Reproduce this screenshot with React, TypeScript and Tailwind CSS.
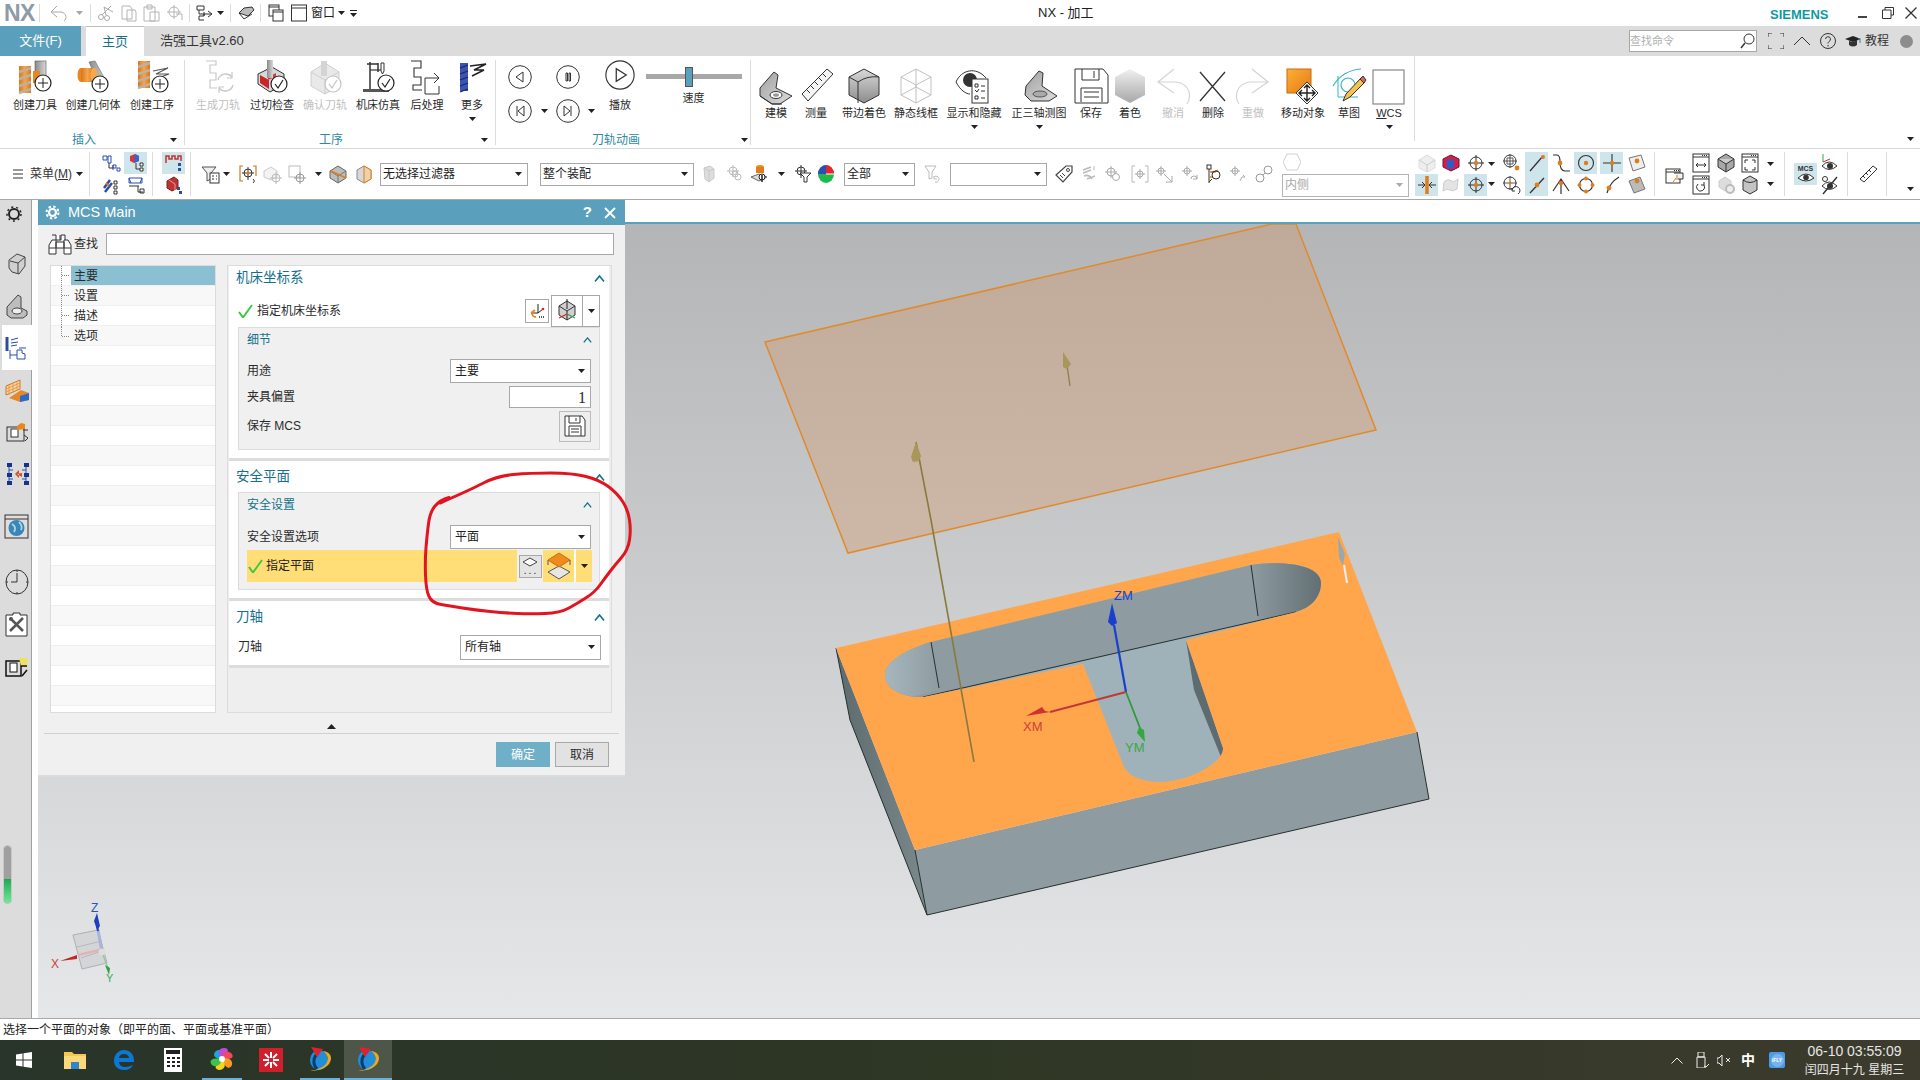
import React from "react";

type N = React.ReactNode;
const Sv = ({ s = 20, vb, c, children }: { s?: number; vb?: string; c?: string; children?: N }) => (
  <svg width={s} height={s} viewBox={vb || `0 0 ${s} ${s}`} className={"block shrink-0 overflow-visible " + (c || "")}>
    {children}
  </svg>
);
const Tri = ({ c = "" }: { c?: string }) => (
  <svg width="7" height="4" viewBox="0 0 7 4" className={"block shrink-0 " + c}>
    <polygon points="0,0 7,0 3.5,4" fill="#222" />
  </svg>
);
const Plus = ({ x = 26, y = 23 }: { x?: number; y?: number }) => (
  <g>
    <circle cx={x} cy={y} r="8" fill="#fff" stroke="#222" strokeWidth="1.2" />
    <path d={`M${x - 5} ${y}H${x + 5}M${x} ${y - 5}V${y + 5}`} stroke="#222" strokeWidth="1" />
  </g>
);
const Chk = ({ x = 26, y = 23, m = false }: { x?: number; y?: number; m?: boolean }) => (
  <g>
    <circle cx={x} cy={y} r="8" fill="#fff" stroke={m ? "#c4c4c4" : "#222"} strokeWidth="1.2" />
    <path d={`M${x - 4} ${y}l3 4l5 -8`} fill="none" stroke={m ? "#c4c4c4" : "#222"} strokeWidth="1.2" />
  </g>
);
const Mill = ({ x = 2, y = 6 }: { x?: number; y?: number }) => (
  <g>
    <rect x={x} y={y} width="12" height="27" fill="url(#gOr)" />
    <path d={`M${x} ${y + 6}l12 -4M${x} ${y + 13}l12 -4M${x} ${y + 20}l12 -4M${x} ${y + 27}l12 -4`} stroke="#b9b1a8" strokeWidth="2.4" />
  </g>
);

/* Ribbon icons */
const R: Record<string, N> = {
  mill: (
    <Sv s={36}>
      <Mill />
      <rect x="18" y="1" width="11" height="19" fill="url(#gGr)" stroke="#555" strokeWidth=".6" />
      <path d="M16 11h7v12h-7z" fill="#e8861f" />
      <Plus />
    </Sv>
  ),
  geom: (
    <Sv s={36}>
      <path d="M14 2l6 -1l12 22l-5 9z" fill="url(#gGr)" stroke="#666" strokeWidth=".6" />
      <ellipse cx="6" cy="15" rx="3.5" ry="7" fill="#e8861f" />
      <rect x="6" y="8" width="13" height="14" fill="url(#gOr)" />
      <ellipse cx="19" cy="15" rx="3.5" ry="7" fill="#f3a94f" />
      <Plus x={25} y={24} />
    </Sv>
  ),
  oper: (
    <Sv s={36}>
      <Mill x={4} y={1} />
      <path d="M19 11l15 -3l-12 6h13l-14 5" fill="none" stroke="#555" strokeWidth="1.1" />
      <Plus x={26} y={24} />
    </Sv>
  ),
  gen: (
    <Sv s={36}>
      <path d="M6 1h10v4h-6v8h6v7h-6v8h7" fill="none" stroke="#c8c8c8" strokeWidth="1.2" />
      <path d="M18 20a8 8 0 0 1 14 -3M33 25a8 8 0 0 1 -14 3" fill="none" stroke="#c8c8c8" strokeWidth="1.4" />
      <path d="M32 12v6h-5M19 33v-6h5" fill="none" stroke="#c8c8c8" strokeWidth="1.2" />
    </Sv>
  ),
  check: (
    <Sv s={36}>
      <path d="M4 14l14 -7l12 7v10l-14 8l-12 -8z" fill="#d8d8d8" stroke="#333" />
      <path d="M6 15l9 5v9l-9 -6z" fill="#c9262c" />
      <path d="M14 20l8 -3v-4l-8 4z" fill="#d93b36" />
      <rect x="13" y="0" width="6" height="18" fill="url(#gGr)" />
      <Chk x={25} y={24} />
    </Sv>
  ),
  confirm: (
    <Sv s={36}>
      <path d="M4 12l14 -9l14 9v14l-14 8l-14 -8z" fill="#e9e9e9" stroke="#cfcfcf" />
      <path d="M4 12l14 8v14M18 20l14 -8" fill="none" stroke="#cfcfcf" />
      <rect x="14" y="1" width="6" height="15" fill="#d4d4d4" />
      <Chk x={26} y={24} m />
    </Sv>
  ),
  sim: (
    <Sv s={36}>
      <path d="M7 4H18M10 2V31M18 3V12M4 31H28" stroke="#333" strokeWidth="1.5" fill="none" />
      <rect x="3" y="29" width="26" height="3" fill="#555" />
      <path d="M10 10H21" stroke="#333" strokeWidth="1.2" />
      <path d="M21 3h3v8l-1.5 3l-1.5 -3z" fill="#fff" stroke="#333" />
      <Chk x={26} y={23} />
    </Sv>
  ),
  post: (
    <Sv s={36}>
      <path d="M2 1h10v7h-7v9h7v8h-8v5h9" fill="none" stroke="#333" strokeWidth="1.1" />
      <path d="M16 18h14l-5 -5M30 18l-5 5M16 18v16h14v-8" fill="none" stroke="#333" strokeWidth="1" />
    </Sv>
  ),
  more: (
    <Sv s={36}>
      <rect x="6" y="3" width="8" height="28" fill="#3a54b4" />
      <path d="M6 8l8 -3M6 14l8 -3M6 20l8 -3M6 26l8 -3M6 32l8 -3" stroke="#16285e" strokeWidth="1.2" />
      <path d="M16 6l16 -2l-12 6h10l-12 6" fill="none" stroke="#222" strokeWidth="1.4" />
    </Sv>
  ),
  bracket: (
    <Sv s={36}>
      <path d="M2 20l14 -16l4 3l-2 13l16 8l-12 8h-8l-12 -8z" fill="url(#gGr2)" stroke="#333" />
      <ellipse cx="18" cy="27" rx="6" ry="3.5" fill="#fff" stroke="#333" />
      <ellipse cx="18" cy="27" rx="3" ry="1.8" fill="#999" />
      <path d="M2 28l12 8h10" fill="none" stroke="#333" />
    </Sv>
  ),
  ruler: (
    <Sv s={36}>
      <path d="M4 26l25 -25l6 5l-25 27z" fill="#f4f4f4" stroke="#333" />
      <path d="M9 22l3 3M13 18l3 3M17 14l3 3M21 10l3 3M25 6l3 3" stroke="#333" />
    </Sv>
  ),
  edge: (
    <Sv s={36}>
      <path d="M3 9l15 -8l15 8v18l-15 8l-15 -8z" fill="url(#gGr3)" stroke="#333" />
      <path d="M3 9l9 5a30 30 0 0 1 21 -5M12 14v21" fill="none" stroke="#333" />
    </Sv>
  ),
  wire: (
    <Sv s={36}>
      <path d="M3 9l15 -8l15 8v18l-15 8l-15 -8zM3 9l15 8l15 -8M18 17v18M3 27l15 -8l15 8M18 1v18" fill="none" stroke="#c0c0c0" />
    </Sv>
  ),
  eye: (
    <Sv s={36}>
      <path d="M0 14C5 2 20 -2 30 10" fill="none" stroke="#333" strokeWidth="1" />
      <path d="M0 14c4 8 10 12 14 12" fill="none" stroke="#333" strokeWidth="1" />
      <circle cx="14" cy="12" r="7" fill="#333" />
      <rect x="16" y="11" width="16" height="24" fill="#fff" stroke="#333" />
      <path d="M19 16h3v3h-3zM25 18h4M19 22l2 2l2 -3M25 23h4M19 28h3v3h-3zM25 30h4" fill="none" stroke="#333" />
    </Sv>
  ),
  flat: (
    <Sv s={36}>
      <path d="M5 18l13 -15l4 2l-1 13l15 10l-8 5h-18l-6 -6z" fill="url(#gGr2)" stroke="#333" />
      <ellipse cx="19" cy="26" rx="7" ry="3" fill="#aaa" stroke="#555" />
    </Sv>
  ),
  save: (
    <Sv s={36}>
      <path d="M2 1h28l5 6v28h-33z" fill="#fff" stroke="#333" />
      <path d="M9 1v11h17v-11M21 3v7M8 34v-14h21v14M11 24h15M11 29h15" fill="none" stroke="#333" />
    </Sv>
  ),
  shade: (
    <Sv s={36}>
      <path d="M3 9l15 -8l15 8v18l-15 8l-15 -8z" fill="url(#gGr4)" />
    </Sv>
  ),
  undo: (
    <Sv s={36}>
      <path d="M19 1L3 14l16 11M3 14h18c14 2 16 14 11 22" fill="none" stroke="#d4d4d4" strokeWidth="1.2" />
    </Sv>
  ),
  del: (
    <Sv s={36}>
      <path d="M5 4l25 29M30 4l-25 29" stroke="#333" strokeWidth="1.3" />
    </Sv>
  ),
  redo: (
    <Sv s={36}>
      <path d="M17 1l16 13l-16 11M33 14h-18c-14 2 -16 14 -11 22" fill="none" stroke="#d4d4d4" strokeWidth="1.2" />
    </Sv>
  ),
  move: (
    <Sv s={36}>
      <rect x="2" y="1" width="24" height="24" fill="url(#gOr2)" stroke="#c76a10" />
      <path d="M22 14l11 11l-11 11l-11 -11z" fill="#fff" stroke="#333" />
      <path d="M22 17v16M14 25h16M19 20l3 -3l3 3M19 30l3 3l3 -3M17 22l-3 3l3 3M27 22l3 3l-3 3" fill="none" stroke="#222" strokeWidth="1.4" />
    </Sv>
  ),
  sketch: (
    <Sv s={36}>
      <path d="M2 18C8 8 18 2 30 1" fill="none" stroke="#32b4c4" strokeWidth="1.2" />
      <path d="M7 8v21h20" fill="none" stroke="#32b4c4" />
      <circle cx="17" cy="17" r="7" fill="none" stroke="#32b4c4" strokeWidth="1.2" />
      <path d="M12 33l3 -7l14 -15l4 4l-14 14z" fill="#f6c34a" stroke="#333" />
      <path d="M29 11l4 4l2 -3l-3 -4z" fill="#e0635a" stroke="#333" />
    </Sv>
  ),
  wcs: (
    <Sv s={36}>
      <rect x="2" y="2" width="31" height="34" fill="#fff" stroke="#888" strokeWidth="1.2" />
    </Sv>
  ),
};

const Target = () => (
  <g>
    <circle cx="10" cy="10" r="6" fill="none" stroke="#333" />
    <path d="M10 2v16M2 10h16" stroke="#333" />
    <circle cx="10" cy="10" r="2.2" fill="#e07c1a" />
  </g>
);
/* Small toolbar icons */
const S: Record<string, N> = {
  t1: <><path d="M2 3h4v4h-4zM7 3h3v7h-3zM12 12h3v3h-3zM16 15h3v3h-3zM12 17v-5" fill="#fff" stroke="#2a4ea8" /><path d="M8 10v5h4" fill="none" stroke="#333" /></>,
  t2: <><path d="M4 3l5 -2l4 2v5l-5 2l-4 -2z" fill="#d23a3a" /><path d="M9 1l4 2v5l-5 2z" fill="#3a62d2" /><path d="M14 10h3v3h-3zM14 15h3v3h-3z" fill="#fff" stroke="#333" /><path d="M10 10v6h4" fill="none" stroke="#333" /></>,
  t3: <><path d="M3 13l6 -8M4 17l7 -9" stroke="#2a4ea8" strokeWidth="2.5" /><path d="M5 8l3 3" stroke="#e07c1a" strokeWidth="2" /><path d="M13 6h3v3h-3zM13 11h3v3h-3zM13 16h3v3h-3z" fill="#fff" stroke="#333" /></>,
  t4: <><path d="M3 3h13v5h-13zM3 3l2 5M16 3l-2 5" fill="none" stroke="#2a4ea8" /><path d="M3 11h10M12 11v6h5M14 14h4v4h-4z" fill="none" stroke="#333" /></>,
  t5: <><path d="M2 10V3h3v3h3V3h3v3h3V3h3v5" fill="none" stroke="#c43030" strokeWidth="1.5" /><path d="M14 10h3v3h-3zM14 15h3v3h-3z" fill="#2a4ea8" /></>,
  t6: <><path d="M3 6l7 -4l4 3v8l-6 3l-5 -3z" fill="#b33" stroke="#722" /><path d="M5 5l6 4v6" fill="none" stroke="#e99" /><path d="M13 12h3v3h-3zM15 16h3v3h-3z" fill="#2a4ea8" /></>,
  filter: <><path d="M1 3h14l-5 6v6l-4 2v-8z" fill="#eee" stroke="#555" /><rect x="9" y="9" width="9" height="10" fill="#fff" stroke="#333" /><path d="M11 12h2M15 12h1M11 15h2M15 15h1" stroke="#333" /></>,
  brk: <><path d="M5 2h-3v15h3M15 2h3v10" fill="none" stroke="#c87a20" strokeWidth="1.2" /><circle cx="10" cy="9" r="4" fill="none" stroke="#333" /><path d="M10 3v13M4 9h12" stroke="#333" /><circle cx="10" cy="9" r="1.5" fill="#e07c1a" /><path d="M15 15q3 2 0 4" fill="none" stroke="#333" /></>,
  mc: <><path d="M2 7l7 -4l6 4v6l-6 3l-7 -3z" fill="#f3f3f3" stroke="#cbcbcb" /><circle cx="14" cy="14" r="4" fill="none" stroke="#bbb" /><path d="M14 8v12M8 14h12" stroke="#bbb" /></>,
  ms: <><rect x="2" y="2" width="11" height="11" fill="#fff" stroke="#bbb" /><circle cx="13" cy="14" r="4" fill="none" stroke="#999" /><path d="M13 8v12M7 14h12" stroke="#999" /></>,
  c1: <><path d="M2 7l8 -5l8 5v7l-8 5l-8 -5z" fill="#bdbdbd" stroke="#666" /><path d="M2 7l8 5l8 -5M10 12v7" fill="none" stroke="#777" /><path d="M3 7l15 7" stroke="#e07c1a" strokeWidth="1.5" /></>,
  c2: <><path d="M3 6l7 -4l7 4v9l-7 4l-7 -4z" fill="#d8d8d8" stroke="#888" /><path d="M10 2l7 4v9l-7 4z" fill="#f0d0a8" stroke="#e07c1a" /></>,
  m1: <><path d="M5 4l6 -2l4 3v9l-5 4l-4 -3z" fill="#ddd" stroke="#c8c8c8" /><path d="M5 4l5 3v11M10 7l5 -2" fill="none" stroke="#c8c8c8" /></>,
  m2: <><circle cx="8" cy="7" r="4" fill="none" stroke="#bbb" /><path d="M8 1v12M2 7h12" stroke="#bbb" /><circle cx="13" cy="13" r="3" fill="none" stroke="#bbb" /><circle cx="10" cy="10" r="3" fill="none" stroke="#bbb" /></>,
  ord: <><ellipse cx="10" cy="3" rx="4" ry="2" fill="#f08a1a" /><rect x="6" y="3" width="8" height="6" fill="#e07c1a" /><path d="M1 13l8 -3l8 3l-8 4z" fill="#ddd" stroke="#666" /><circle cx="12" cy="13" r="3" fill="#fff" stroke="#222" /><path d="M12 11v7" stroke="#222" strokeWidth="1.5" /></>,
  tfil: <><circle cx="8" cy="7" r="4" fill="none" stroke="#333" /><path d="M8 1v13M2 7h12" stroke="#333" /><path d="M7 9h11l-4 4v5h-3v-5z" fill="#fff" stroke="#333" /></>,
  pie: <><ellipse cx="10" cy="10" rx="8" ry="9" fill="#1fb84b" /><path d="M10 10V1a8 9 0 0 1 8 9z" fill="#e8222e" /><path d="M10 1a8 9 0 0 0 -8 9h8z" fill="#2b4fb8" /><path d="M10 10h8" stroke="#fff" /></>,
  fback: <><path d="M3 2h11l-4 6v6l-3 1v-7z" fill="#fff" stroke="#bbb" /><path d="M12 13a3 3 0 1 1 1 5M12 12v3h3" fill="none" stroke="#bbb" /></>,
  tag: <><path d="M2 11l10 -9h6v6l-9 10z" fill="#fff" stroke="#444" strokeWidth="1.2" /><circle cx="14" cy="6" r="1.5" fill="none" stroke="#444" /><path d="M6 11l3 3M8 9l3 3" stroke="#444" /></>,
  g1: <><path d="M4 6l8 -3M4 9l8 -3M8 15l8 -3M5 12q5 -2 8 3" fill="none" stroke="#bbb" strokeWidth="1.6" /><path d="M15 2v4" stroke="#bbb" /></>,
  g2: <><circle cx="8" cy="8" r="4" fill="none" stroke="#aaa" /><path d="M8 2v12M2 8h12" stroke="#aaa" /><circle cx="13" cy="13" r="3.5" fill="#fff" stroke="#aaa" /></>,
  g3: <><path d="M5 2h-3v16h3M15 2h3v16h-3" fill="none" stroke="#bbb" /><circle cx="10" cy="10" r="3" fill="none" stroke="#aaa" /><path d="M10 5v10M5 10h10" stroke="#aaa" /></>,
  g4: <><circle cx="7" cy="7" r="3" fill="none" stroke="#aaa" /><path d="M7 2v10M2 7h10" stroke="#aaa" /><path d="M10 10l8 8M18 12v6h-6" fill="none" stroke="#aaa" /></>,
  g5: <><circle cx="7" cy="7" r="3" fill="none" stroke="#aaa" /><path d="M7 2v10M2 7h10" stroke="#aaa" /><path d="M11 15a3 3 0 0 1 6 0M17 11v4h-4" fill="none" stroke="#aaa" /></>,
  spec: <><rect x="4" y="1" width="4" height="4" fill="#fff" stroke="#333" /><path d="M6 5v14" stroke="#333" /><path d="M7 8h5l3 -2M7 13h3" stroke="#e07c1a" strokeWidth="1.4" /><circle cx="13" cy="11" r="4" fill="none" stroke="#333" /><path d="M6 18l3 -3" stroke="#333" /></>,
  g6: <><circle cx="7" cy="7" r="3" fill="none" stroke="#aaa" /><path d="M7 2v10M2 7h10" stroke="#aaa" /><path d="M12 17l2 -4h3M15 11l2 2" fill="none" stroke="#aaa" /></>,
  chain: <><circle cx="6" cy="14" r="4" fill="none" stroke="#999" /><circle cx="14" cy="6" r="4" fill="none" stroke="#999" /><path d="M9 11l2 -2" stroke="#999" /></>,
  cubeM: <><path d="M2 7l8 -5l8 5v8l-8 4l-8 -4z" fill="#eee" stroke="#ddd" /><path d="M2 7l8 5l8 -5M10 12v7" fill="none" stroke="#ccc" /></>,
  cubeR: <><path d="M2 6l8 -4l8 4v8l-8 4l-8 -4z" fill="#cc2148" stroke="#7a1030" /><path d="M6 7l7 -1v9l-7 1z" fill="#3558c8" /></>,
  tgt: <Target />,
  tgtD: <><circle cx="9" cy="8" r="6" fill="none" stroke="#333" /><path d="M9 1v14M2 8h14M6 5h6M6 11h6M6 5v6M12 5v6" stroke="#333" strokeWidth=".8" /><circle cx="16" cy="15" r="2.4" fill="#e07c1a" /></>,
  tgtB: <><circle cx="9" cy="8" r="6" fill="none" stroke="#333" /><path d="M9 1v14M2 8h14" stroke="#333" strokeWidth=".8" /><circle cx="9" cy="8" r="1.5" fill="#e07c1a" /><path d="M11 15a4 4 0 1 1 6 4M11 13v3h3" fill="none" stroke="#333" /></>,
  line: <><path d="M3 18L16 3" stroke="#333" strokeWidth="1.3" /><circle cx="16" cy="4" r="2" fill="#e07c1a" /></>,
  line2: <><path d="M3 18L17 3" stroke="#333" strokeWidth="1.3" /><circle cx="10" cy="10" r="2.4" fill="#e07c1a" /></>,
  tan: <><path d="M2 2h4c3 0 3 4 3 7s0 9 5 9h5" fill="none" stroke="#333" strokeWidth="1.2" /><circle cx="9" cy="10" r="2.4" fill="#e07c1a" /></>,
  tan2: <><path d="M2 16q6 -9 8 -12q2 3 8 12M10 4v15" fill="none" stroke="#333" strokeWidth="1.2" /><circle cx="10" cy="8" r="2.2" fill="#e07c1a" /></>,
  circ: <><circle cx="10" cy="10" r="7.5" fill="none" stroke="#333" strokeWidth="1.1" /><circle cx="10" cy="10" r="2.2" fill="#e07c1a" /></>,
  circ4: <><circle cx="10" cy="10" r="6.5" fill="none" stroke="#333" strokeWidth="1.1" /><circle cx="10" cy="3.5" r="2" fill="#e07c1a" /><circle cx="10" cy="16.5" r="2" fill="#e07c1a" /><circle cx="3.5" cy="10" r="2" fill="#e07c1a" /><circle cx="16.5" cy="10" r="2" fill="#e07c1a" /></>,
  cross: <><path d="M10 1v18M1 10h18" stroke="#333" strokeWidth="1.1" /><circle cx="10" cy="10" r="2.2" fill="#e07c1a" /></>,
  arc: <><path d="M5 18C7 10 12 5 17 2" fill="none" stroke="#333" strokeWidth="1.2" /><circle cx="7" cy="13" r="2.4" fill="#e07c1a" /></>,
  srf: <><path d="M2 5l12 -3l4 12l-12 4z" fill="#eee" stroke="#777" /><circle cx="10" cy="8" r="2.4" fill="#e07c1a" /></>,
  srf2: <><path d="M2 6l11 -4l5 12l-11 4z" fill="#bbb" stroke="#777" /><circle cx="10" cy="6" r="2.4" fill="#e07c1a" /></>,
  midb: <><path d="M10 1v18" stroke="#e07c1a" strokeWidth="3.5" /><path d="M1 10h6M19 10h-6M5 7l3 3l-3 3M15 7l-3 3l3 3" fill="none" stroke="#333" /></>,
  srfM: <><path d="M3 7q4 -4 7 -1q3 2 7 -2l-1 10q-4 3 -7 1q-3 -2 -7 1z" fill="#e4e4e4" stroke="#ccc" /></>,
  win1: <><rect x="1" y="5" width="14" height="14" fill="#fff" stroke="#333" /><path d="M1 8h14M9 6.500h1M11 6.500h1M13 6.500h1" stroke="#333" /><path d="M9 9h9v6h-5" fill="#f3f3f3" stroke="#333" /><path d="M8 18l3 -4M12 11v5" stroke="#e07c1a" /></>,
  fit: <><rect x="2" y="1" width="16" height="18" fill="#fff" stroke="#333" /><path d="M2 4h16M11 2.500h1M13 2.500h1M15 2.500h1M5 12h10M5 12l2 -2M5 12l2 2M15 12l-2 -2M15 12l-2 2" fill="none" stroke="#333" /></>,
  reg: <><rect x="2" y="1" width="16" height="18" fill="#fff" stroke="#333" /><path d="M2 4h16M11 2.500h1M13 2.500h1M15 2.500h1" stroke="#333" /><path d="M7 9a4 4 0 1 0 6 1M13 7v3h-3" fill="none" stroke="#333" /></>,
  zoom: <><rect x="2" y="1" width="16" height="18" fill="#fff" stroke="#333" /><path d="M2 4h16M11 2.500h1M13 2.500h1M15 2.500h1M5 7h3M5 7v3M15 7h-3M15 7v3M5 17h3M5 17v-3M15 17h-3M15 17v-3" fill="none" stroke="#333" /></>,
  box3: <><path d="M2 6l8 -5l8 5v8l-8 5l-8 -5z" fill="#a8a8a8" stroke="#333" /><path d="M2 6l8 5l8 -5" fill="#ccc" stroke="#333" /><path d="M10 11v8" stroke="#333" /></>,
  gearM: <><path d="M3 6l6 -4l6 4v6l-6 4l-6 -4z" fill="#ddd" stroke="#ccc" /><circle cx="14" cy="14" r="4" fill="#eee" stroke="#bbb" strokeWidth="2" /></>,
  hex3: <><path d="M3 5l7 -4l7 4v10l-7 4l-7 -4z" fill="#c4c4c4" stroke="#333" /><path d="M3 5q7 5 14 0" fill="none" stroke="#333" /></>,
  eyeA: <><path d="M2 13q7 -8 15 0q-8 7 -15 0z" fill="#fff" stroke="#333" /><circle cx="10" cy="13" r="3" fill="#333" /><path d="M3 1v8" stroke="#2fa84f" /><path d="M3 9l7 -3" stroke="#c43030" /></>,
  eyeS: <><path d="M2 11q7 -8 15 0q-8 7 -15 0z" fill="#fff" stroke="#333" /><circle cx="10" cy="11" r="3" fill="#333" /><path d="M3 19L17 2" stroke="#333" strokeWidth="1.4" /><circle cx="5" cy="4" r="2.500" fill="none" stroke="#333" /></>,
  rul: <><path d="M2 15L15 2l4 3L6 18z" fill="#fff" stroke="#333" /><path d="M5 12l2 2M8 9l2 2M11 6l2 2" stroke="#333" /></>,
};
const Ti = ({ n, s = 20 }: { n: string; s?: number }) => (
  <svg width={s} height={s} viewBox="0 0 20 20" className="block shrink-0 overflow-visible">
    {S[n]}
  </svg>
);

const Cell = ({ n, on }: { n: string; on?: boolean }) => (
  <div className={"w-[23px] h-[22px] flex items-center justify-center " + (on ? "bg-[#cfe5ec]" : "")}>
    {n ? <Ti n={n} /> : null}
  </div>
);
const Two = ({ a, b, ao, bo, cls = "" }: { a: string; b: string; ao?: boolean; bo?: boolean; cls?: string }) => (
  <div className={"flex flex-col shrink-0 " + cls}>
    <Cell n={a} on={ao} />
    <Cell n={b} on={bo} />
  </div>
);
const Sel = ({ cls, label, dis }: { cls: string; label?: string; dis?: boolean }) => (
  <div className={"shrink-0 bg-white border flex items-center justify-between pl-[2px] pr-[5px] text-[12px] " + (dis ? "border-[#b4b4b4] text-[#a8a8a8] " : "border-[#a8a8a8] text-[#222] ") + cls}>
    <span>{label}</span>
    <svg width="7" height="4" viewBox="0 0 7 4" className="block shrink-0">
      <polygon points="0,0 7,0 3.5,4" fill={dis ? "#aaa" : "#222"} />
    </svg>
  </div>
);

const Item = ({ w, ic, label, mute, drop, top }: { w: string; ic: string; label: N; mute?: boolean; drop?: boolean; top?: string }) => (
  <div className={"shrink-0 flex flex-col items-center " + w + " " + (top || "pt-[4px]")}>
    {R[ic]}
    <div className={"text-[11px] leading-[12px] mt-[3px] whitespace-nowrap " + (mute ? "text-[#c0c0c0]" : "text-[#2a2a2a]")}>{label}</div>
    {drop ? <Tri c="mt-[6px]" /> : null}
  </div>
);

const Circ = ({ s = 24, d }: { s?: number; d: string }) => (
  <svg width={s} height={s} viewBox="0 0 24 24" className="block shrink-0">
    <circle cx="12" cy="12" r="11.300" fill="#fff" stroke="#333" strokeWidth={s > 24 ? 0.9 : 1} />
    <path d={d} fill="none" stroke="#333" strokeWidth="1" />
  </svg>
);

const Ribbon = () => (
  <div className="h-[93px] shrink-0 bg-white border-b border-[#d8d8d8] flex pt-[4px] relative">
    <div className="shrink-0 flex flex-col w-[185px] h-[85px] border-r border-[#dcdcdc]">
      <div className="flex h-[71px] shrink-0 pl-[6px] -mt-[4px]">
        <Item w="w-[58px]" ic="mill" label="创建刀具" />
        <Item w="w-[58px]" ic="geom" label="创建几何体" />
        <Item w="w-[60px]" ic="oper" label="创建工序" />
      </div>
      <div className="flex items-center h-[14px] mt-[6px] text-[12px] leading-[14px] text-[#2f8aa3] shrink-0">
        <span className="ml-[72px] w-[98px]">插入</span>
        <Tri />
      </div>
    </div>
    <div className="shrink-0 flex flex-col w-[311px] h-[85px] border-r border-[#dcdcdc]">
      <div className="flex h-[71px] shrink-0 pl-[6px] -mt-[4px]">
        <Item w="w-[54px]" ic="gen" label="生成刀轨" mute />
        <Item w="w-[54px]" ic="check" label="过切检查" />
        <Item w="w-[52px]" ic="confirm" label="确认刀轨" mute />
        <Item w="w-[54px]" ic="sim" label="机床仿真" />
        <Item w="w-[44px]" ic="post" label="后处理" />
        <Item w="w-[46px]" ic="more" label="更多" drop />
      </div>
      <div className="flex items-center h-[14px] mt-[6px] text-[12px] leading-[14px] text-[#2f8aa3] shrink-0">
        <span className="ml-[134px] w-[162px]">工序</span>
        <Tri />
      </div>
    </div>
    <div className="shrink-0 flex flex-col w-[255px] h-[85px] border-r border-[#dcdcdc]">
      <div className="flex h-[71px] shrink-0 pl-[12px] pt-[9px] -mt-[4px]">
        <div className="flex flex-col gap-[10px] w-[24px]">
          <Circ d="M15 7v10l-7 -5z" />
          <Circ d="M9 7v10M16 7v10l-6 -5z" />
        </div>
        <div className="w-[24px] flex flex-col items-center pt-[44px]"><Tri /></div>
        <div className="flex flex-col gap-[10px] w-[24px]">
          <Circ d="M10 8h1.500v8h-1.500zM13 8h1.500v8h-1.500z" />
          <Circ d="M15 7v10M8 7v10l6 -5z" />
        </div>
        <div className="w-[22px] flex flex-col items-center pt-[44px]"><Tri /></div>
        <div className="w-[36px] flex flex-col items-center -mt-[5px]">
          <Circ s={30} d="M9 7v10l8 -5z" />
          <div className="text-[11px] leading-[12px] mt-[9px] text-[#2a2a2a]">播放</div>
        </div>
        <div className="ml-[7px] w-[97px] flex flex-col items-center pt-[9px]">
          <div className="w-[96px] h-[5px] bg-[#a8a8a8] flex justify-start pl-[39px]">
            <div className="w-[8px] h-[20px] -mt-[7px] bg-[#5a9fbb] border border-[#555]" />
          </div>
          <div className="text-[11px] leading-[12px] mt-[13px] text-[#2a2a2a]">速度</div>
        </div>
      </div>
      <div className="flex items-center h-[14px] mt-[6px] text-[12px] leading-[14px] text-[#2f8aa3] shrink-0">
        <span className="ml-[96px] w-[149px]">刀轨动画</span>
        <Tri />
      </div>
    </div>
    <div className="shrink-0 w-[664px] h-[85px] border-r border-[#dcdcdc] flex pl-[6px] -mt-[4px]">
      <Item top="pt-[12px]" w="w-[38px]" ic="bracket" label="建模" />
      <Item top="pt-[12px]" w="w-[42px]" ic="ruler" label="测量" />
      <Item top="pt-[12px]" w="w-[54px]" ic="edge" label="带边着色" />
      <Item top="pt-[12px]" w="w-[50px]" ic="wire" label="静态线框" />
      <Item top="pt-[12px]" w="w-[66px]" ic="eye" label="显示和隐藏" drop />
      <Item top="pt-[12px]" w="w-[64px]" ic="flat" label="正三轴测图" drop />
      <Item top="pt-[12px]" w="w-[40px]" ic="save" label="保存" />
      <Item top="pt-[12px]" w="w-[38px]" ic="shade" label="着色" />
      <Item top="pt-[12px]" w="w-[48px]" ic="undo" label="撤消" mute />
      <Item top="pt-[12px]" w="w-[32px]" ic="del" label="删除" />
      <Item top="pt-[12px]" w="w-[48px]" ic="redo" label="重做" mute />
      <Item top="pt-[12px]" w="w-[52px]" ic="move" label="移动对象" />
      <Item top="pt-[12px]" w="w-[40px]" ic="sketch" label="草图" />
      <Item top="pt-[12px]" w="w-[40px]" ic="wcs" label={<><u>W</u>CS</>} drop />
    </div>
    <div className="flex-1 flex items-end justify-end pr-[6px] pb-[7px]"><Tri /></div>
  </div>
);

const Vsep = ({ cls = "" }: { cls?: string }) => <div className={"w-px h-[44px] bg-[#dcdcdc] shrink-0 " + cls} />;
const Tb = ({ n, m }: { n: string; m: string }) => <div className={"shrink-0 " + m}><Ti n={n} /></div>;
const Ta = ({ m }: { m: string }) => <Tri c={m} />;

const Toolbar = () => (
  <div className="h-[51px] shrink-0 bg-white border-b border-[#a8a8a8] flex items-center text-[12px]">
    <div className="w-[89px] shrink-0 flex items-center pl-[13px] text-[#333]">
      <svg width="10" height="10" viewBox="0 0 10 10" className="shrink-0"><path d="M0 1h10M0 5h10M0 9h10" stroke="#333" /></svg>
      <span className="ml-[7px] whitespace-nowrap">菜单(<u>M</u>)</span>
      <Tri c="ml-[4px]" />
    </div>
    <Vsep />
    <Two a="t1" b="t3" cls="ml-[9px]" />
    <Two a="t2" b="t4" ao cls="ml-[2px]" />
    <Vsep cls="ml-[5px]" />
    <Two a="t5" b="t6" ao cls="ml-[9px]" />
    <Vsep cls="ml-[5px]" />
    <Tb n="filter" m="ml-[10px]" />
    <Ta m="ml-[2px]" />
    <Tb n="brk" m="ml-[8px]" />
    <Tb n="mc" m="ml-[4px]" />
    <Tb n="ms" m="ml-[5px]" />
    <Ta m="ml-[8px]" />
    <Tb n="c1" m="ml-[6px]" />
    <Tb n="c2" m="ml-[6px]" />
    <Sel cls="ml-[6px] w-[148px] h-[23px]" label="无选择过滤器" />
    <Sel cls="ml-[12px] w-[154px] h-[23px]" label="整个装配" />
    <Tb n="m1" m="ml-[5px]" />
    <Tb n="m2" m="ml-[6px]" />
    <Tb n="ord" m="ml-[5px]" />
    <Ta m="ml-[8px]" />
    <Tb n="tfil" m="ml-[8px]" />
    <Tb n="pie" m="ml-[3px]" />
    <Sel cls="ml-[8px] w-[71px] h-[23px]" label="全部" />
    <Tb n="fback" m="ml-[7px]" />
    <Sel cls="ml-[8px] w-[97px] h-[23px]" />
    <Tb n="tag" m="ml-[7px]" />
    <Tb n="g1" m="ml-[5px]" />
    <Tb n="g2" m="ml-[4px]" />
    <Tb n="g3" m="ml-[7px]" />
    <Tb n="g4" m="ml-[4px]" />
    <Tb n="g5" m="ml-[6px]" />
    <Tb n="spec" m="ml-[3px]" />
    <Tb n="g6" m="ml-[5px]" />
    <Tb n="chain" m="ml-[6px]" />
    <div className="ml-[8px] w-[127px] shrink-0 flex flex-col">
      <svg width="18" height="20" viewBox="0 0 18 20" className="block ml-[1px] mb-[2px]"><path d="M4 2h10l4 8l-4 8H4L0 10z" fill="none" stroke="#d0d0d0" /></svg>
      <Sel cls="w-[127px] h-[23px]" label="内侧" dis />
    </div>
    <Two a="cubeM" b="midb" bo cls="ml-[6px]" />
    <Two a="cubeR" b="srfM" cls="ml-[1px]" />
    <Two a="tgt" b="tgt" bo cls="ml-[2px]" />
    <div className="w-[6px] ml-[1px] flex flex-col shrink-0 h-[44px] pt-[10px] pb-[10px] justify-between">
      <Tri /><Tri />
    </div>
    <Two a="tgtD" b="tgtB" cls="ml-[5px]" />
    <Two a="line" b="line2" ao bo cls="ml-[3px]" />
    <Two a="tan" b="tan2" cls="ml-[1px]" />
    <Two a="circ" b="circ4" ao cls="ml-[2px]" />
    <Two a="cross" b="arc" ao cls="ml-[3px]" />
    <Two a="srf" b="srf2" cls="ml-[2px]" />
    <Vsep cls="ml-[6px]" />
    <Tb n="win1" m="ml-[10px]" />
    <Two a="fit" b="reg" cls="ml-[4px]" />
    <Two a="box3" b="gearM" cls="ml-[2px]" />
    <Two a="zoom" b="hex3" cls="ml-[1px]" />
    <div className="w-[6px] ml-[6px] flex flex-col shrink-0 h-[44px] pt-[10px] pb-[10px] justify-between">
      <Tri /><Tri />
    </div>
    <Vsep cls="ml-[11px]" />
    <div className="ml-[9px] w-[23px] h-[22px] bg-[#cfe5ec] shrink-0 flex flex-col items-center justify-center">
      <span className="text-[7px] leading-[7px] text-[#333] font-bold">MCS</span>
      <svg width="18" height="11" viewBox="0 0 18 11" className="block"><path d="M1 6q8 -8 16 0q-8 6 -16 0z" fill="#fff" stroke="#333" /><circle cx="9" cy="5.500" r="2.800" fill="#333" /></svg>
    </div>
    <Two a="eyeA" b="eyeS" cls="ml-[1px]" />
    <Vsep cls="ml-[6px]" />
    <Tb n="rul" m="ml-[10px]" />
    <Vsep cls="ml-[8px]" />
    <Tri c="ml-[20px] mt-[30px]" />
  </div>
);

const TitleBar = () => (
  <div className="h-[26px] shrink-0 bg-white flex items-center relative text-[12px] text-[#222]">
    <span className="ml-[4px] w-[33px] text-[23px] leading-[26px] font-bold text-[#8d9ba8] font-['Liberation_Sans',sans-serif] tracking-[-0.5px]">NX</span>
    <div className="ml-[2px] h-[18px] w-px bg-[#dcdcdc] shrink-0" />
    <svg width="18" height="18" viewBox="0 0 18 18" className="ml-[10px] shrink-0"><path d="M7 2L1 8l6 5M1 8h10c6 1 6 7 3 9" fill="none" stroke="#aaa" /></svg>
    <Tri c="ml-[8px] opacity-40" />
    <div className="ml-[7px] h-[18px] w-px bg-[#dcdcdc] shrink-0" />
    <svg width="16" height="16" viewBox="0 0 16 16" className="ml-[7px] shrink-0"><circle cx="3" cy="12" r="2.500" fill="none" stroke="#aaa" /><circle cx="9" cy="13" r="2.500" fill="none" stroke="#aaa" /><path d="M4 10l9 -9M8 10L6 2l9 5" fill="none" stroke="#aaa" /></svg>
    <svg width="16" height="17" viewBox="0 0 16 17" className="ml-[7px] shrink-0"><path d="M1 1h8l2 3v10H1zM6 5h8l1 2v9H6z" fill="#fff" stroke="#b4b4b4" /></svg>
    <svg width="17" height="18" viewBox="0 0 17 18" className="ml-[6px] shrink-0"><path d="M1 3h11v14H1zM4 1h5v4H4zM7 8h9v9H7z" fill="#fff" stroke="#b4b4b4" /></svg>
    <svg width="16" height="16" viewBox="0 0 16 16" className="ml-[7px] shrink-0"><circle cx="7" cy="7" r="5" fill="none" stroke="#b4b4b4" /><path d="M7 0v14M0 7h14M9 9h6v6" fill="none" stroke="#b4b4b4" /></svg>
    <div className="ml-[6px] h-[18px] w-px bg-[#dcdcdc] shrink-0" />
    <svg width="17" height="16" viewBox="0 0 17 16" className="ml-[6px] shrink-0"><path d="M1 1h7v4H1zM3 5v4h5v2H3v4h5M8 9h8M12 6l4 3l-4 3M8 7v4" fill="none" stroke="#333" /></svg>
    <Tri c="ml-[4px]" />
    <div className="ml-[6px] h-[18px] w-px bg-[#dcdcdc] shrink-0" />
    <svg width="17" height="15" viewBox="0 0 17 15" className="ml-[7px] shrink-0"><path d="M1 7l5 -5l8 -1l2 3l-6 6z" fill="#bbb" stroke="#333" /><path d="M1 7l5 6l8 -5" fill="none" stroke="#333" /></svg>
    <div className="ml-[5px] h-[18px] w-px bg-[#dcdcdc] shrink-0" />
    <svg width="16" height="18" viewBox="0 0 16 18" className="ml-[7px] shrink-0"><rect x="1" y="1" width="10" height="11" fill="#fff" stroke="#333" /><rect x="5" y="6" width="10" height="11" fill="#fff" stroke="#333" /><path d="M5 8h10M1 3h10" stroke="#333" /></svg>
    <svg width="16" height="18" viewBox="0 0 16 18" className="ml-[7px] shrink-0"><rect x=".5" y="1" width="15" height="16" fill="#fff" stroke="#333" /><path d="M0 4h16" stroke="#333" /></svg>
    <span className="ml-[4px] whitespace-nowrap w-[26px]">窗口</span>
    <Tri c="ml-[1px]" />
    <svg width="7" height="7" viewBox="0 0 7 7" className="ml-[5px] shrink-0"><path d="M0 .5h7" stroke="#222" /><polygon points="0,3 7,3 3.500,7" fill="#222" /></svg>
    <span className="ml-[681px] text-[13px] whitespace-nowrap w-[60px] shrink-0">NX - 加工</span>
    <span className="ml-[672px] w-[60px] pt-[3px] text-[13px] font-bold text-[#0f9a9f] font-['Liberation_Sans',sans-serif] shrink-0">SIEMENS</span>
    <div className="ml-[28px] w-[9px] h-[2px] bg-[#444] mt-[8px] shrink-0" />
    <svg width="12" height="12" viewBox="0 0 12 12" className="ml-[15px] shrink-0"><path d="M3 3V.5h8.500V8H9M.5 3H9v8.500H.5z" fill="none" stroke="#333" /></svg>
    <svg width="12" height="12" viewBox="0 0 12 12" className="ml-[11px] shrink-0"><path d="M.5 .5l11 11M11.500 .5l-11 11" stroke="#333" strokeWidth="1.300" /></svg>
  </div>
);

const TabBar = () => (
  <div className="h-[30px] shrink-0 bg-[#dcdcdc] flex items-stretch text-[13px]">
    <div className="w-[81px] bg-[#5a9fbb] text-white flex items-center justify-center">文件(F)</div>
    <div className="ml-[5px] w-[58px] bg-white border-t border-[#bcbcbc] text-[#1a6f88] flex items-center justify-center">主页</div>
    <div className="ml-[16px] flex items-center text-[#333] w-[1469px]">浩强工具v2.60</div>
    <div className="w-[128px] h-[22px] self-center bg-white border border-[#a8a8a8] flex items-center justify-between text-[11px] text-[#b0b0b0] shrink-0">
      <span>查找命令</span>
      <svg width="15" height="16" viewBox="0 0 15 16" className="mr-[1px]"><circle cx="9" cy="6" r="5" fill="none" stroke="#333" /><path d="M5 10l-4 5" stroke="#333" strokeWidth="1.500" /></svg>
    </div>
    <svg width="16" height="16" viewBox="0 0 16 16" className="ml-[11px] self-center shrink-0"><path d="M0 4V0h4M12 0h4v4M0 12v4h4M16 12v4h-4" fill="none" stroke="#333" /></svg>
    <svg width="16" height="10" viewBox="0 0 16 10" className="ml-[10px] self-center shrink-0"><path d="M0 9l8 -8l8 8" fill="none" stroke="#333" /></svg>
    <svg width="16" height="16" viewBox="0 0 16 16" className="ml-[10px] self-center shrink-0"><circle cx="8" cy="8" r="7.500" fill="none" stroke="#333" /><path d="M5.500 6a2.500 2.500 0 1 1 3.500 2.500Q8 9 8 10.500M8 12v1.500" fill="none" stroke="#333" /></svg>
    <svg width="16" height="13" viewBox="0 0 16 13" className="ml-[9px] self-center shrink-0"><path d="M0 4l8 -3l8 3l-8 3z" fill="#222" /><path d="M4 6v4q4 3 8 0V5l-4 2z" fill="#333" /><path d="M13 4h2v4" stroke="#2f8aa3" fill="none" /></svg>
    <span className="ml-[4px] self-center text-[12px] text-[#333] w-[24px] shrink-0">教程</span>
    <div className="ml-[11px] w-[13px] h-[13px] rounded-full bg-[#8c8c8c] self-center shrink-0" />
  </div>
);

const SIcon = ({ children, cls = "" }: { children: N; cls?: string }) => (
  <svg width="24" height="24" viewBox="0 0 24 24" className={"block shrink-0 overflow-visible " + cls}>{children}</svg>
);
const Sidebar = () => (
  <div className="w-[32px] shrink-0 bg-[#dcdcdc] border-r border-[#a0a0a0] flex flex-col items-center pl-[2px]">
    <SIcon cls="mt-[2px] -ml-[5px]"><circle cx="12" cy="12" r="5" fill="none" stroke="#222" strokeWidth="2" /><circle cx="12" cy="12" r="7" fill="none" stroke="#222" strokeWidth="1.500" strokeDasharray="2 3" /></SIcon>
    <SIcon cls="mt-[26px]"><path d="M4 8l8 -6l8 3v9l-6 8l-7 -2l-3 -4z" fill="#d0d0d0" stroke="#444" /><path d="M5 9l8 2l7 -6M13 11v11" fill="none" stroke="#444" /></SIcon>
    <SIcon cls="mt-[17px]"><path d="M2 14L13 2l3 2v11l6 3v4l-4 3H6l-4 -3z" fill="#bdbdbd" stroke="#444" /><ellipse cx="12" cy="18" rx="5" ry="3" fill="#eee" stroke="#444" /></SIcon>
    <div className="mt-[8px] w-[30px] h-[45px] bg-white flex items-center justify-center">
      <SIcon><path d="M2 1v14" stroke="#2a4ea8" strokeWidth="3" /><path d="M6 4l7 -2M6 7l7 -1M6 10l6 -1M14 12h7" stroke="#2a4ea8" /><path d="M5 14v9M5 19h7M12 14v9h8v-5l-3 -1v-3z" fill="none" stroke="#2a4ea8" /></SIcon>
    </div>
    <SIcon cls="mt-[8px]"><path d="M1 8l14 -6v9l-14 6z" fill="#f6d7a0" stroke="#c87a20" /><path d="M4 7v10M8 5v10M12 3v10M1 11l14 -6M1 14l14 -6" stroke="#e89a50" fill="none" /><path d="M4 20l12 -8l8 3v7l-9 2z" fill="#e6872a" /><path d="M15 18l9 -3v7l-9 2z" fill="#2a6bc8" /></SIcon>
    <SIcon cls="mt-[16px]"><rect x="2" y="9" width="17" height="14" fill="#ddd" stroke="#333" /><rect x="6" y="11" width="7" height="8" fill="#fff" stroke="#333" /><path d="M12 8l4 -3l4 1v5l-8 1z" fill="#e8861f" /><path d="M18 12h5M19 17l4 3l-3 3" fill="none" stroke="#333" /></SIcon>
    <SIcon cls="mt-[19px]"><path d="M4 2v22M21 2v22M4 9h4M21 9h-4M4 18h4M21 18h-4" stroke="#2a4ea8" /><path d="M2 2h5v4H2zM19 2h5v4h-5zM2 12h5v4H2zM19 12h5v4h-5zM2 20h5v4H2zM19 20h5v4h-5z" fill="#17318f" /><path d="M14 9l-4 4l4 4zM12 13l5 -1v4z" fill="#e0481e" /></SIcon>
    <SIcon cls="mt-[30px]"><rect x="0" y="0" width="23" height="23" fill="#dedede" stroke="#333" /><path d="M0 4h23" stroke="#333" /><circle cx="11.500" cy="13" r="8" fill="#3a86b8" /><path d="M7 9q5 3 2 8M14 7q4 4 2 8" stroke="#a6d6e6" strokeWidth="1.800" fill="none" /></SIcon>
    <SIcon cls="mt-[31px]"><ellipse cx="12" cy="12" rx="11" ry="12" fill="none" stroke="#333" /><path d="M12 3v9H6M12 0v2M12 22v2M1 12h2M21 12h2" fill="none" stroke="#333" /></SIcon>
    <SIcon cls="mt-[19px]"><path d="M1 2h7V0h7v2h7v21H1z" fill="#fff" stroke="#333" /><path d="M5 5l13 13M18 5L5 18" stroke="#555" strokeWidth="2.500" /><circle cx="6" cy="6" r="2" fill="#555" /></SIcon>
    <SIcon cls="mt-[16px]"><rect x="1" y="8" width="15" height="15" fill="#ddd" stroke="#111" strokeWidth="1.500" /><rect x="5" y="10" width="7" height="9" fill="#fff" stroke="#111" /><path d="M14 5h8v8h-6z" fill="#f0e05a" /><path d="M16 13h6M22 17l-5 6" stroke="#111" strokeWidth="1.500" /></SIcon>
    <div className="mt-[168px] w-[9px] h-[59px] mr-[19px] rounded-full bg-[#a0a0a0] border border-[#c8c8c8] overflow-hidden flex flex-col justify-end shrink-0">
      <div className="h-[24px] bg-gradient-to-b from-[#17a85a] to-[#6fea96]" />
    </div>
  </div>
);

const Chev = ({ cls = "", s = 1 }: { cls?: string; s?: number }) => (
  <svg width={s === 1 ? 11 : 9} height={s === 1 ? 7 : 6} viewBox="0 0 11 7" className={"block shrink-0 " + cls}>
    <path d="M1 6.500L5.500 1L10 6.500" fill="none" stroke="#14708c" strokeWidth="1.600" />
  </svg>
);
const Chk2 = ({ cls = "" }: { cls?: string }) => (
  <svg width="15" height="14" viewBox="0 0 15 14" className={"block shrink-0 " + cls}>
    <path d="M1 8l4 5.500L14 1" fill="none" stroke="#42c63e" strokeWidth="2" />
  </svg>
);
const FSave = () => (
  <svg width="22" height="22" viewBox="0 0 22 22"><path d="M1 1h17l3 4v16H1z" fill="#fff" stroke="#333" /><path d="M5 1v7h11V1M12 3v3M5 21V11h12v10M7 14h8M7 17h8" fill="none" stroke="#333" /></svg>
);
const PlanePick = () => (
  <div className="flex flex-col items-center justify-center w-[23px] h-[23px] bg-[#e4e4e4] border border-[#a8a8a8] shrink-0">
    <svg width="16" height="10" viewBox="0 0 16 10" className="block"><path d="M8 1l7 4l-7 4l-7 -4z" fill="#fff" stroke="#444" /></svg>
    <span className="text-[10px] leading-[8px] tracking-[2px] text-[#222] pl-[2px]">...</span>
  </div>
);

const Dialog = () => (
  <div className="absolute left-[38px] top-0 w-[587px] h-[577px] bg-[#f0f0f0] border-b-2 border-[#dcdcdc] flex flex-col text-[12px] text-[#2a2a2a] z-10">
    <div className="h-[25px] shrink-0 bg-[#5a9fbb] flex items-center text-white">
      <svg width="15" height="15" viewBox="0 0 15 15" className="ml-[7px] shrink-0"><circle cx="7.500" cy="7.500" r="3.500" fill="none" stroke="#fff" strokeWidth="2.200" /><circle cx="7.500" cy="7.500" r="6" fill="none" stroke="#fff" strokeWidth="2" strokeDasharray="2.500 2.200" /></svg>
      <span className="ml-[8px] text-[14.500px] font-['Liberation_Sans',sans-serif] flex-1">MCS Main</span>
      <span className="text-[15px] font-bold font-['Liberation_Sans',sans-serif] mr-[12px]">?</span>
      <svg width="12" height="12" viewBox="0 0 12 12" className="mr-[9px] shrink-0"><path d="M1 1l10 10M11 1L1 11" stroke="#fff" strokeWidth="1.800" /></svg>
    </div>
    <div className="flex items-center h-[22px] mt-[8px] shrink-0">
      <svg width="24" height="21" viewBox="0 0 24 21" className="ml-[10px] shrink-0"><path d="M4 1h4v5h4V1h0M12 6h1V1h4v5M1 20V11l3 -5h4v14zM23 20V11l-3 -5h-4v14zM8 8h8v6H8zM1 14h7M16 14h7" fill="#fff" stroke="#333" /></svg>
      <span className="ml-[2px] w-[32px]">查找</span>
      <div className="w-[508px] h-[22px] bg-white border border-[#a8a8a8] shrink-0" />
    </div>
    <div className="flex mt-[10px] ml-[12px]">
      <div className="w-[166px] h-[448px] shrink-0 bg-white border border-[#dcdcdc] overflow-hidden flex flex-col">
        {Array.from({ length: 23 }).map((_, i) => {
          const t = ["主要", "设置", "描述", "选项"][i];
          return (
            <div key={i} className={"h-[20px] shrink-0 flex border-b border-[#f0f0f0] " + (i % 2 ? "bg-[#f8f8f8]" : "bg-white")}>
              {t ? (
                <>
                  <div className={"w-[20px] shrink-0 border-l border-dotted border-[#888] ml-[10px] -mr-[10px] flex items-center " + (i === 3 ? "h-[10px]" : "")}>
                    <div className={"w-[7px] border-t border-dotted border-[#888] " + (i === 3 ? "mt-[10px]" : "")} />
                  </div>
                  <div className={"flex-1 flex items-center pl-[3px] " + (i === 0 ? "bg-[#8ac0d2]" : "")}>{t}</div>
                </>
              ) : null}
            </div>
          );
        })}
      </div>
      <div className="ml-[11px] w-[385px] h-[448px] shrink-0 border border-[#dcdcdc] bg-[#eeeeee] flex flex-col">
        <div className="h-[195px] ml-[1px] mr-[2px] bg-white border-b-[3px] border-[#dcdcdc] shrink-0 px-[9px] flex flex-col">
          <div className="h-[27px] flex items-center justify-between text-[13.500px] text-[#14708c] -ml-[2px] shrink-0 pb-[2px]">
            <span>机床坐标系</span><Chev cls="-mr-[5px]" />
          </div>
          <div className="h-[36px] flex items-center shrink-0 relative">
            <Chk2 />
            <span className="ml-[4px] flex-1">指定机床坐标系</span>
            <div className="w-[24px] h-[24px] bg-white border border-[#a8a8a8] flex items-center justify-center shrink-0 mr-[2px]">
              <svg width="18" height="18" viewBox="0 0 18 18"><path d="M10 2v9M10 11l5 -4M10 11H3" stroke="#222" /><path d="M3 11l4 -3M4 11a4 4 0 0 0 4 4" fill="none" stroke="#e8861f" strokeWidth="1.800" /><path d="M13 15h1M15 15h1M11 15h1" stroke="#222" strokeWidth="1.500" /><circle cx="15" cy="7" r="1.300" fill="#d22" /></svg>
            </div>
            <div className="w-[49px] h-[32px] bg-white border border-[#a8a8a8] flex shrink-0">
              <div className="w-[31px] border-r border-[#a8a8a8] flex items-center justify-center">
                <svg width="22" height="24" viewBox="0 0 22 24"><path d="M3 7l8 -5l8 5v9l-8 5l-8 -5z" fill="#d0d0d0" stroke="#333" /><path d="M3 7l8 5l8 -5" fill="none" stroke="#333" /><path d="M11 12v9" stroke="#222" /><path d="M11 15l8 4" stroke="#2fa84f" strokeWidth="1.300" /><path d="M11 15l-8 4" stroke="#d22" strokeWidth="1.300" /><path d="M11 0v10" stroke="#222" /></svg>
              </div>
              <div className="flex-1 flex items-center justify-center"><Tri /></div>
            </div>
          </div>
          <div className="h-[123px] shrink-0 bg-[#f0f0f0] border border-[#dcdcdc] mt-[-2px] flex flex-col px-[8px]">
            <div className="h-[24px] flex items-center justify-between text-[#14708c] shrink-0"><span>细节</span><Chev s={2} cls="-mr-[1px]" /></div>
            <div className="h-[32px] flex items-center justify-between shrink-0 pt-[6px]">
              <span>用途</span><Sel cls="w-[141px] h-[24px] pl-[4px]" label="主要" />
            </div>
            <div className="h-[25px] flex items-center justify-between shrink-0">
              <span>夹具偏置</span>
              <div className="w-[82px] h-[22px] bg-white border border-[#a8a8a8] text-right pr-[4px] text-[16px] leading-[21px] font-['Liberation_Serif',serif]">1</div>
            </div>
            <div className="h-[33px] flex items-center justify-between shrink-0 pt-px">
              <span>保存 MCS</span>
              <div className="w-[32px] h-[31px] bg-[#eeeeee] border border-[#bcbcbc] flex items-center justify-center"><FSave /></div>
            </div>
          </div>
        </div>
        <div className="h-[140px] ml-[1px] mr-[2px] bg-white border-b-[3px] border-[#dcdcdc] shrink-0 px-[9px] flex flex-col">
          <div className="h-[31px] flex items-center justify-between text-[13.500px] text-[#14708c] -ml-[2px] shrink-0 pt-[2px]">
            <span>安全平面</span><Chev cls="-mr-[5px]" />
          </div>
          <div className="h-[98px] shrink-0 bg-[#f0f0f0] border border-[#dcdcdc] flex flex-col px-[8px]">
            <div className="h-[24px] flex items-center justify-between text-[#14708c] shrink-0"><span>安全设置</span><Chev s={2} cls="-mr-[1px]" /></div>
            <div className="h-[33px] flex items-center justify-between shrink-0 pt-[6px]">
              <span>安全设置选项</span><Sel cls="w-[141px] h-[24px] pl-[4px]" label="平面" />
            </div>
            <div className="h-[32px] flex shrink-0">
              <div className="w-[270px] bg-[#ffdd77] flex items-center text-[#222] shrink-0">
                <Chk2 cls="ml-[1px]" /><span className="ml-[3px]">指定平面</span>
              </div>
              <div className="w-[26px] flex items-center justify-center shrink-0"><PlanePick /></div>
              <div className="w-[33px] bg-[#ffdd77] border-r-2 border-white flex items-center justify-center shrink-0">
                <svg width="26" height="28" viewBox="0 0 26 28"><path d="M13 14l11 6l-11 7l-11 -7z" fill="#e6e6e6" stroke="#555" /><path d="M13 1l11 7l-11 7l-11 -7z" fill="#ee8a1e" stroke="#c87010" /><path d="M2 8v5M24 8v5" stroke="#555" /></svg>
              </div>
              <div className="w-[16px] bg-[#ffdd77] flex items-center justify-center shrink-0"><Tri /></div>
            </div>
          </div>
        </div>
        <div className="h-[67px] ml-[1px] mr-[2px] bg-white border-b-[3px] border-[#dcdcdc] shrink-0 px-[9px] flex flex-col">
          <div className="h-[32px] flex items-center justify-between text-[13.500px] text-[#14708c] -ml-[2px] shrink-0">
            <span>刀轴</span><Chev cls="-mr-[5px]" />
          </div>
          <div className="flex items-center justify-between h-[28px]">
            <span>刀轴</span><Sel cls="w-[141px] h-[25px] pl-[4px] -mr-[1px]" label="所有轴" />
          </div>
        </div>
      </div>
    </div>
    <div className="h-[20px] flex justify-center shrink-0 pt-[11px]">
      <svg width="9" height="5" viewBox="0 0 9 5" className="block"><polygon points="0,5 9,5 4.500,0" fill="#222" /></svg>
    </div>
    <div className="mx-[6px] h-px bg-[#d0d0d0] shrink-0" />
    <div className="flex justify-end gap-[5px] mt-[8px] pr-[16px]">
      <div className="w-[54px] h-[25px] bg-[#6fb0c8] text-white flex items-center justify-center">确定</div>
      <div className="w-[54px] h-[25px] bg-[#e2e2e2] border border-[#a8a8a8] flex items-center justify-center">取消</div>
    </div>
  </div>
);

const SL = "M923,697 C905,698 885,690 885,675 C885,662 905,650 931,642 L1251,565 C1285,560 1321,565 1321,583 C1321,598 1310,608 1296,612 L1186,640 L1223,748 C1223,765 1185,782 1160,782 C1140,782 1128,775 1124,767 L1083,664 Z";
const Model = () => (
  <svg viewBox="38 224 1882 794" className="absolute inset-0 w-full h-full block">
    <defs>
      <clipPath id="slot"><path d={SL} /></clipPath>
      <linearGradient id="capL" x1="0" x2="1"><stop offset="0" stopColor="#a9b9bf" /><stop offset="1" stopColor="#8e9ca1" /></linearGradient>
      <linearGradient id="capR" x1="0" x2="1"><stop offset="0" stopColor="#8e9ca1" /><stop offset="1" stopColor="#5c6a6e" /></linearGradient>
      <linearGradient id="sideL" x1="0" x2="1"><stop offset="0" stopColor="#5d6a6e" /><stop offset="1" stopColor="#7b898d" /></linearGradient>
    </defs>
    <polygon points="765,342 1272,224 1296,224 1376,430 848,553" fill="#d79660" fillOpacity="0.33" stroke="#e08a2c" strokeWidth="1.500" />
    <path d="M916,442 L931,520" stroke="#8a7a3c" strokeWidth="1.600" />
    <polygon points="916,442 911,457 913,462 919,461 921,456" fill="#a8965a" />
    <path d="M1067,365 L1070,386" stroke="#8a7a3c" strokeWidth="1.200" />
    <polygon points="1063,352 1063,367 1067,369 1071,364" fill="#a8965a" />
    <polygon points="836,648 915,850 927,915 850,720" fill="url(#sideL)" />
    <polygon points="915,850 1417,732 1429,799 927,915" fill="#8e9ca1" />
    <path d="M836,648 L850,720 L927,915 L1429,799 L1417,732 M915,850 L927,915" fill="none" stroke="#26302f" strokeWidth="1" />
    <polygon points="836,648 1339,532 1417,732 915,850" fill="#ffa64d" />
    <path d={SL} fill="#a0b2b9" />
    <g clipPath="url(#slot)">
      <polygon points="870,710 1296,612 1340,560 1251,540 870,630" fill="#8e9ca1" />
      <polygon points="880,640 931,640 939,690 880,705" fill="url(#capL)" />
      <polygon points="1251,560 1330,555 1330,600 1296,612 1258,620" fill="url(#capR)" />
      <polygon points="1186,640 1223,748 1223,762 1194,690" fill="#5e6c70" />
      <path d="M923,697 L1296,612 M931,642 L939,688 M1251,565 L1258,616" fill="none" stroke="#26302f" strokeWidth="1" />
    </g>
    <polygon points="1338,537 1345,554 1343,565 1339,558" fill="#9aa8ae" />
    <path d="M1344,565 L1347,583" stroke="#eee" strokeWidth="2" />
    <path d="M931,520 L974,762" stroke="#8a7a3c" strokeWidth="1.600" />
    <path d="M1126,692 L1114,625" stroke="#1a3fcf" strokeWidth="2.200" />
    <polygon points="1112,603 1108,622 1112,626 1117,623" fill="#1a3fcf" />
    <path d="M1126,692 L1050,712" stroke="#c03838" strokeWidth="2" />
    <polygon points="1026,716 1042,707 1045,711 1050,712" fill="#d03030" />
    <path d="M1126,692 L1140,728" stroke="#2f9a3c" strokeWidth="1.800" />
    <polygon points="1145,742 1137,733 1139,727 1144,730" fill="#32a83e" />
    <text x="1114" y="600" fontSize="13" fill="#1a3fcf" fontFamily="Liberation Sans">ZM</text>
    <text x="1023" y="731" fontSize="13" fill="#d0403a" fontFamily="Liberation Sans">XM</text>
    <text x="1125" y="752" fontSize="13" fill="#38a84a" fontFamily="Liberation Sans">YM</text>
    <g>
      <polygon points="73,935 98,930 107,963 82,969" fill="#d4d5d7" stroke="#b0b0b2" />
      <path d="M77,947 L102,941 M98,930 L104,952 M81,958 L105,950" fill="none" stroke="#b8b8ba" />
      <path d="M100,950 L78,955" stroke="#e0b4b4" strokeWidth="2.500" />
      <path d="M98,930 L102,952" stroke="#a8b4d8" strokeWidth="3" />
      <circle cx="102" cy="952" r="3.500" fill="#ddd" />
      <path d="M103,955 L108,968" stroke="#98c8a0" strokeWidth="1.500" />
      <polygon points="97,913 94,921 97,930 100,926" fill="#1f3fc0" />
      <path d="M97,925 L98,931" stroke="#1f3fc0" strokeWidth="2" />
      <polygon points="60,961 77,955 77,959" fill="#c02828" />
      <polygon points="109,975 105,965 110,968" fill="#32a03c" />
      <text x="91" y="912" fontSize="12" fill="#2a50d0" fontFamily="Liberation Sans">Z</text>
      <text x="51" y="968" fontSize="12" fill="#d04040" fontFamily="Liberation Sans">X</text>
      <text x="106" y="982" fontSize="11" fill="#48a858" fontFamily="Liberation Sans">Y</text>
    </g>
  </svg>
);

const pts: [number, number][] = [[440, 503], [470, 490], [497, 476], [530, 473], [572, 473], [600, 480], [618, 494], [628, 510], [631, 530], [628, 550], [615, 565], [605, 578], [595, 592], [578, 603], [560, 613], [530, 614], [505, 613], [475, 610], [450, 606], [432, 603], [426, 590], [425, 560], [427, 535], [430, 512], [440, 500], [458, 495]];
const smooth = () => {
  let d = `M${pts[0][0]} ${pts[0][1]}`;
  for (let i = 1; i < pts.length - 1; i++) {
    const mx = (pts[i][0] + pts[i + 1][0]) / 2;
    const my = (pts[i][1] + pts[i + 1][1]) / 2;
    d += ` Q${pts[i][0]} ${pts[i][1]} ${mx} ${my}`;
  }
  return d;
};

function NxIcon() {
  return (
    <svg width="24" height="26" viewBox="0 0 24 26">
      <ellipse cx="11" cy="14" rx="9" ry="10" fill="#1f8fd8" />
      <path d="M8 9c-3 4 -3 10 1 14" stroke="#0a3a78" strokeWidth="3" fill="none" />
      <polygon points="3,1 15,3 9,11" fill="#e02030" />
      <path d="M15 5c8 1 10 7 6 13c-4 5 -12 7 -19 7c7 -1 15 -4 17 -9c2 -4 0 -8 -4 -11z" fill="#e8a828" />
    </svg>
  );
}
const Under = ({ children }: { children: N }) => (
  <div className="w-[49px] flex justify-center">
    <div className="w-[40px] flex items-center justify-center border-b-2 border-[#6cb0dc]">{children}</div>
  </div>
);
const Taskbar = () => (
  <div className="h-[40px] shrink-0 bg-gradient-to-r from-[#29352a] via-[#2e3624] to-[#3c3b2d] flex items-stretch text-white">
    <div className="w-[48px] flex items-center justify-center">
      <svg width="16" height="16" viewBox="0 0 16 16"><path d="M0 2.500l6.500 -1V7.500H0zM7.500 1.300L16 0v7.500H7.500zM0 8.500h6.500v6l-6.500 -1zM7.500 8.500H16V16l-8.500 -1.300z" fill="#fff" /></svg>
    </div>
    <div className="w-[49px] ml-[2px] flex items-center justify-center">
      <svg width="22" height="20" viewBox="0 0 22 20"><path d="M0 2h8l2 2h12v15H0z" fill="#f6c652" /><path d="M0 6h22v13H0z" fill="#fbd97a" /><path d="M7 12h8v7H7z" fill="#2f86c8" /></svg>
    </div>
    <div className="w-[49px] flex items-center justify-center">
      <svg width="20" height="21" viewBox="0 0 20 21"><path d="M19 15c-2 4 -5 5 -9 5c-6 0 -10 -4 -10 -9C0 5 4 0 10 0c6 0 10 4 10 11v1H5c0 3 3 5 6 5c3 0 5 -1 8 -2zM5 8h10c0 -2 -2 -4 -5 -4S5 6 5 8z" fill="#0a78d4" /></svg>
    </div>
    <div className="w-[49px] flex items-center justify-center">
      <svg width="18" height="24" viewBox="0 0 18 24"><rect width="18" height="24" fill="#fff" /><rect x="2" y="2" width="14" height="4" fill="#222" /><path d="M3 10h3M8 10h3M13 10h3M3 14h3M8 14h3M13 14h3M3 18h3M8 18h3M13 18h3" stroke="#222" strokeWidth="2" /></svg>
    </div>
    <Under>
      <svg width="24" height="24" viewBox="0 0 24 24"><path d="M12 12C6 12 2 9 5 5c3 -3 7 -4 7 7" fill="#1aa6e0" /><path d="M12 12C7 7 8 1 14 1c4 0 7 3 -2 11" fill="#c04ad8" /><path d="M12 12c0 -6 5 -9 9 -6c3 3 3 7 -9 6" fill="#f04a5a" /><path d="M12 12c6 -2 11 1 10 6c-2 4 -6 5 -10 -6" fill="#fb9a20" /><path d="M12 12c5 5 3 11 -3 11c-4 -1 -6 -4 3 -11" fill="#f6d420" /><path d="M12 12c-1 6 -6 9 -10 6c-3 -3 -2 -8 10 -6" fill="#3fc24a" /><circle cx="12" cy="12" r="3" fill="#fff" /></svg>
    </Under>
    <div className="w-[49px] flex items-center justify-center">
      <div className="w-[24px] h-[24px] bg-[#d01f2c] flex items-center justify-center">
        <svg width="18" height="18" viewBox="0 0 18 18"><path d="M9 1v6M9 11v6M1 9h6M11 9h6M3 3l4 4M11 11l4 4M15 3l-4 4M3 15l4 -4" stroke="#fff" strokeWidth="2" /></svg>
      </div>
    </div>
    <Under><NxIcon /></Under>
    <div className="w-[48px] flex items-center justify-center bg-[#4d5648] border-b-2 border-[#6cb0dc]"><NxIcon /></div>
    <div className="flex-1 flex items-center justify-end">
      <svg width="12" height="7" viewBox="0 0 12 7" className="mr-[13px]"><path d="M.5 6.500L6 1l5.500 5.500" fill="none" stroke="#eee" /></svg>
      <svg width="13" height="16" viewBox="0 0 13 16" className="mr-[8px]"><path d="M2 0h6v5H2zM1 5h8v11H1zM8 14l2 1l3 -3" fill="none" stroke="#eee" /></svg>
      <svg width="14" height="11" viewBox="0 0 14 11" className="mr-[10px]"><path d="M0 3h2l3 -3v11l-3 -3H0zM9 3l4 4M13 3L9 7" fill="none" stroke="#eee" /></svg>
      <span className="mr-[13px] text-[14px] font-bold w-[15px]">中</span>
      <div className="mr-[19px] w-[16px] h-[16px] bg-[#4a9be8] rounded-[2px] flex items-center justify-center">
        <div className="w-[13px] h-[13px] rounded-full bg-white/25 text-[5px] leading-[13px] text-center font-bold">iFLY</div>
      </div>
      <div className="w-[101px] text-center text-[12px] leading-[19px] text-[#e6e6e6] mr-[15px] pt-px whitespace-nowrap">
        <div className="text-[14px]">06-10 03:55:09</div>
        <div>闰四月十九 星期三</div>
      </div>
    </div>
  </div>
);

export default function App() {
  return (
    <div className="w-[1920px] h-[1080px] relative overflow-hidden flex flex-col bg-white font-['Liberation_Sans','Noto_Sans_CJK_SC',sans-serif]">
      <svg width="0" height="0" className="absolute">
        <defs>
          <linearGradient id="gOr" x1="0" y1="0" x2="1" y2="0"><stop offset="0" stopColor="#d9761a" /><stop offset=".5" stopColor="#f6a54a" /><stop offset="1" stopColor="#d9761a" /></linearGradient>
          <linearGradient id="gOr2" x1="0" y1="0" x2="1" y2="1"><stop offset="0" stopColor="#fcb03a" /><stop offset="1" stopColor="#e8780f" /></linearGradient>
          <linearGradient id="gGr" x1="0" y1="0" x2="1" y2="0"><stop offset="0" stopColor="#8a8a8a" /><stop offset="1" stopColor="#d8d8d8" /></linearGradient>
          <linearGradient id="gGr2" x1="0" y1="0" x2="1" y2="1"><stop offset="0" stopColor="#a0a0a0" /><stop offset="1" stopColor="#dcdcdc" /></linearGradient>
          <linearGradient id="gGr3" x1="0" y1="0" x2="0" y2="1"><stop offset="0" stopColor="#d8d8d8" /><stop offset="1" stopColor="#8c8c8c" /></linearGradient>
          <linearGradient id="gGr4" x1="0" y1="0" x2="0" y2="1"><stop offset="0" stopColor="#f0f0f0" /><stop offset="1" stopColor="#a8a8a8" /></linearGradient>
        </defs>
      </svg>
      <TitleBar />
      <TabBar />
      <Ribbon />
      <Toolbar />
      <div className="flex-1 flex relative min-h-0">
        <Sidebar />
        <div className="w-[6px] bg-white shrink-0" />
        <div className="flex-1 flex flex-col min-w-0">
          <div className="h-[24px] shrink-0 bg-white border-b-2 border-[#5a9fbb]" />
          <div className="flex-1 relative bg-gradient-to-b from-[#b4b5b6] to-[#e6e7e9]">
            <Model />
          </div>
        </div>
        <Dialog />
      </div>
      <div className="h-[22px] shrink-0 bg-white border-t border-[#a8a8a8] flex items-center pl-[3px] text-[12px] text-[#222]">选择一个平面的对象（即平的面、平面或基准平面）</div>
      <Taskbar />
      <svg width="1920" height="1080" viewBox="0 0 1920 1080" className="absolute inset-0 pointer-events-none z-20">
        <path d={smooth()} fill="none" stroke="#e2141f" strokeWidth="3" strokeLinejoin="round" strokeLinecap="round" />
      </svg>
    </div>
  );
}
